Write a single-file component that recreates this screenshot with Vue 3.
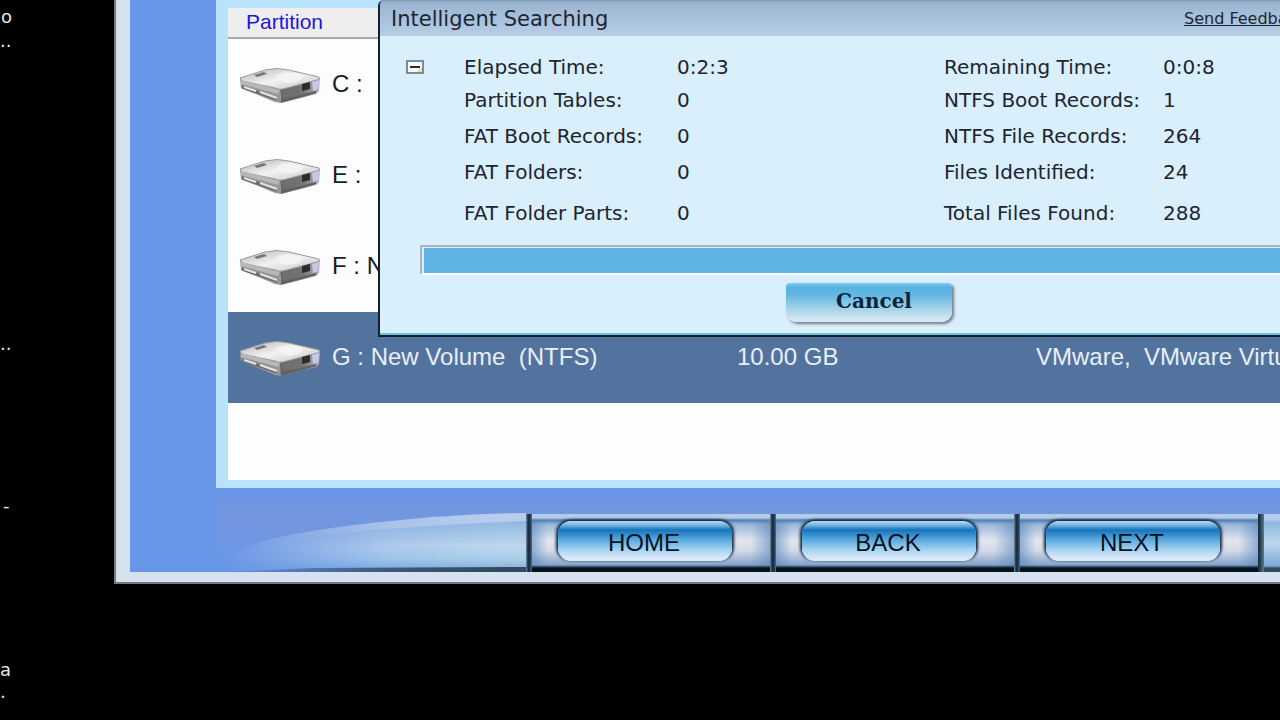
<script setup>
import { ref } from 'vue';

const shortcuts = ['o', '..', '..', '-', 'a', '.'];

const partitions = [
	{ name: 'C :', size: '', device: '' },
	{ name: 'E :', size: '', device: '' },
	{ name: 'F : New Volume', size: '', device: '' },
	{ name: 'G : New Volume  (NTFS)', size: '10.00 GB', device: 'VMware,  VMware Virtual' },
];
const selected = ref(3);

const stats = [
	['Elapsed Time:', '0:2:3', 'Remaining Time:', '0:0:8'],
	['Partition Tables:', '0', 'NTFS Boot Records:', '1'],
	['FAT Boot Records:', '0', 'NTFS File Records:', '264'],
	['FAT Folders:', '0', 'Files Identified:', '24'],
	['FAT Folder Parts:', '0', 'Total Files Found:', '288'],
];

const steps = ['HOME', 'BACK', 'NEXT'];
</script>

<template>
	<div class="desktop">
		<!-- desktop labels -->
		<span
			v-for="(text, index) in shortcuts"
			:key="index"
			:class="['shortcut', 'shortcut-' + index]"
		>{{ text }}</span>

		<main class="window">
			<div class="window__body">
				<section class="partitions">
					<div class="partitions__list">
						<table class="partitions__table">
							<thead>
								<tr>
									<th class="col-name">Partition</th>
									<th class="col-size"></th>
									<th></th>
								</tr>
							</thead>
							<tbody>
								<tr
									v-for="(item, index) in partitions"
									:key="item.name"
									:class="{ selected: index === selected }"
									@click="selected = index"
								>
									<td>
										<div class="drive">
											<svg
												class="drive__icon"
												width="82"
												height="36"
												viewBox="0 0 82 36"
											>
												<defs>
													<linearGradient :id="'top' + index" x1="0" y1="0" x2="1" y2="1">
														<stop offset="0" stop-color="#b4b4b4" />
														<stop offset="0.5" stop-color="#f2f2f2" />
														<stop offset="1" stop-color="#c2c2c2" />
													</linearGradient>
													<linearGradient :id="'side' + index" x1="0" y1="0" x2="1" y2="0">
														<stop offset="0" stop-color="#666" />
														<stop offset="0.6" stop-color="#777" />
														<stop offset="1" stop-color="#b5b4cc" />
													</linearGradient>
												</defs>
												<path d="M1 10 L41 20 L42 35 L36 34 L2 20 Z" fill="#969696" />
												<path d="M41 20 L81 10 L80 23 L77 26 L42 35 Z" :fill="'url(#side' + index + ')'" />
												<path d="M1 10 L26 2 Q38 -1 50 2 L80 9 Q82 11 78 12 L44 21 Q40 22 36 20 L3 13 Z" :fill="'url(#top' + index + ')'" stroke="#999" stroke-width="1" />
												<path d="M37 7 Q50 1 65 8 Q62 15 48 15 Q39 13 37 7 Z" fill="#f5f5f5" opacity="0.8" />
												<path d="M15 7 L25 4 L28 6 L18 9 Z" fill="#777" />
												<path d="M2 14 L40 24" stroke="#b8b8b8" stroke-width="4" />
												<path d="M3 19 L38 31" stroke="#6c6c6c" stroke-width="3" />
												<path d="M5 19 L17 23 M21 24 L38 30" stroke="#e4e4e4" stroke-width="2" />
												<path d="M44 23 L61 18 L61 24 L44 30 Z" fill="#707070" />
												<path d="M63 16 L71 14 L71 21 L63 23 Z" fill="#2c2c2c" />
												<path d="M73 14 L80 12 L79 21 L74 23 Z" fill="#c9c8e6" />
												<path d="M42 33 L77 24" stroke="#606060" stroke-width="2" />
											</svg>
											<span>{{ item.name }}</span>
										</div>
									</td>
									<td>{{ item.size }}</td>
									<td>{{ item.device }}</td>
								</tr>
							</tbody>
						</table>
					</div>
				</section>

				<nav class="steps">
					<svg
						class="steps__swoosh"
						width="310"
						height="60"
						viewBox="0 0 310 60"
					>
						<defs>
							<linearGradient id="fade" x1="0" y1="0" x2="1" y2="0">
								<stop offset="0.02" stop-color="#fff" stop-opacity="0" />
								<stop offset="0.55" stop-color="#fff" stop-opacity="0.8" />
								<stop offset="0.9" stop-color="#fff" />
							</linearGradient>
							<linearGradient id="wing" x1="0" y1="0" x2="0" y2="1">
								<stop offset="0" stop-color="#8fb8e0" />
								<stop offset="0.5" stop-color="#bdd7ee" />
								<stop offset="0.75" stop-color="#aacdea" />
								<stop offset="1" stop-color="#79a9d8" />
							</linearGradient>
							<mask id="wingMask">
								<rect width="310" height="60" fill="url(#fade)" />
							</mask>
						</defs>
						<g mask="url(#wingMask)">
							<path d="M0 48 Q40 28 84 21 Q134 12 217 5 Q270 1 310 1 L310 60 L0 60 Z" fill="#b7cdec" />
							<path d="M0 52 Q40 34 90 25 Q184 14 310 9 L310 60 L0 60 Z" fill="url(#wing)" />
							<path d="M0 60 L100 56 L310 55 L310 60 Z" fill="#334961" />
						</g>
					</svg>
					<div
						v-for="step in steps"
						:key="step"
						class="steps__cell"
					>
						<button type="button" class="steps__button">{{ step }}</button>
					</div>
					<div class="steps__tail"></div>
				</nav>
			</div>
		</main>

		<!-- search progress dialog -->
		<section class="dialog">
			<header class="dialog__title">
				<h1>Intelligent Searching</h1>
				<a href="#">Send Feedback</a>
			</header>
			<div class="dialog__details">
				<button type="button" class="dialog__toggle" aria-label="Collapse details">
					<svg width="18" height="14" viewBox="0 0 18 14">
						<rect x="1" y="1" width="16" height="12" fill="#fff" stroke="#7b8c9c" stroke-width="2" />
						<path d="M10 12 L16 7 L16 12 Z" fill="#f3d9a0" />
						<path d="M4 7 H14" stroke="#3a2b1c" stroke-width="2" />
					</svg>
				</button>
				<dl class="stats">
					<template v-for="row in stats" :key="row[0]">
						<dt>{{ row[0] }}</dt>
						<dd>{{ row[1] }}</dd>
						<dt>{{ row[2] }}</dt>
						<dd>{{ row[3] }}</dd>
					</template>
				</dl>
			</div>
			<progress class="dialog__progress" value="100" max="100" aria-label="Search progress"></progress>
			<div class="dialog__actions">
				<button type="button" class="cancel">Cancel</button>
			</div>
		</section>
	</div>
</template>

<style>
	body{
		background: #000;
	}
</style>

<style scoped>
	.desktop{
		position: relative;
		min-height: 100vh;
		overflow: hidden;
		background: #000;
		font-family: "Liberation Sans", Arial, sans-serif;
	}
	.shortcut{
		position: absolute;
		left: 0;
		color: #e8e8e8;
		font: 18px/20px "DejaVu Sans", Verdana, sans-serif;
	}
	.shortcut-0{
		left: 1px;
		top: 7px;
	}
	.shortcut-1{
		top: 31px;
	}
	.shortcut-2{
		top: 334px;
	}
	.shortcut-3{
		left: 3px;
		top: 496px;
	}
	.shortcut-4{
		top: 660px;
	}
	.shortcut-5{
		top: 682px;
	}
	.window{
		margin-left: 114px;
		padding: 0 0 10px 14px;
		border: solid #77797c;
		border-width: 0 0 2px 2px;
		background: #d5e3f0;
	}
	.window__body{
		background: #6896e8;
	}
	.partitions{
		margin-left: 86px;
		padding: 8px 0 8px 12px;
		background: #b9e2fc;
	}
	.partitions__list{
		padding-bottom: 77px;
		background: #fdfdfd;
	}
	.partitions__table{
		width: 100%;
		table-layout: fixed;
		border-spacing: 0;
	}
	th{
		height: 27px;
		padding: 0 0 2px 18px;
		border-bottom: 2px solid #aaa;
		background: #efeeee;
		color: #1d17dc;
		font-size: 21px;
		font-weight: normal;
		line-height: 24px;
		text-align: left;
	}
	.col-name{
		width: 491px;
	}
	.col-size{
		width: 281px;
	}
	td{
		height: 89px;
		padding: 0 0 2px;
		color: #1c1c22;
		font-size: 24px;
		line-height: 28px;
		white-space: pre;
	}
	.selected{
		background: #53739f;
	}
	.selected td{
		color: #e8effa;
	}
	.drive{
		display: flex;
		align-items: center;
		gap: 11px;
		padding-left: 11px;
	}
	.drive__icon{
		flex: none;
		margin-top: 4px;
	}
	.steps{
		display: flex;
		height: 60px;
		margin-left: 86px;
		padding-top: 24px;
		background: linear-gradient(#6896e8, #7397df 30px, #6896e8);
	}
	.steps__swoosh{
		flex: none;
	}
	.steps__cell{
		box-sizing: border-box;
		flex: none;
		display: flex;
		width: 244px;
		margin-top: 2px;
		padding: 7px 0 0 32px;
		background:
			linear-gradient(90deg, #7890a6, #172d40 2px, #1d3449 4px, #4f6f8f 6px) 0 0 / 6px 100% no-repeat,
			linear-gradient(#b5cce6 0 4px, #4f7fb1 6px, transparent 10px, transparent 51px, #07111c 54px),
			linear-gradient(90deg, #5b8abf99 6px, transparent 22px, transparent 224px, #5b8abf99),
			linear-gradient(#7da5d2 4px, #e2e5ee 26px, #d8dcea 36px, #7c9fc8 52px);
	}
	.steps__button{
		width: 174px;
		height: 40px;
		padding: 4px 2px 0 0;
		border: 0;
		border-radius: 13px;
		background: linear-gradient(#b9dcf3 0, #78b5df 4px, #1474bd 9px, #5cabe0 19px, #a9d3f2 29px, #dceaf8 38px);
		box-shadow: -2px -1px 3px #0b2740, 2px -1px 3px #0b2740;
		color: #07131f;
		font: 24px/28px "Liberation Sans", Arial, sans-serif;
	}
	.steps__tail{
		flex: 1;
		margin-top: 2px;
		background:
			linear-gradient(90deg, #172d40, #24394d 2px, #62788d 6px) 0 0 / 6px 100% no-repeat,
			linear-gradient(#b7cdec 5px, #8fb8e0 9px, #bdd7ee 30px, #79a9d8 52px, #334961 54px);
	}
	.dialog{
		position: absolute;
		top: 0;
		left: 378px;
		right: 0;
		border: solid #14202b;
		border-width: 0 0 2px 2px;
		border-top-left-radius: 6px;
		background: #d9effc;
		box-shadow: inset 0 -2px 0 #6cc4da;
		color: #1d2530;
		font-family: "DejaVu Sans", Verdana, sans-serif;
		overflow: hidden;
	}
	.dialog__title{
		display: flex;
		align-items: center;
		box-sizing: border-box;
		height: 36px;
		padding: 2px 0 0 11px;
		background: linear-gradient(#7f98b3 0, #9bb5d1 3px, #b7cde7);
		white-space: nowrap;
	}
	.dialog__title h1{
		flex: 1;
		margin: 0;
		font-size: 21px;
		font-weight: normal;
		line-height: 26px;
	}
	.dialog__title a{
		flex: none;
		width: 96px;
		color: #1d2530;
		font-size: 16px;
		line-height: 20px;
	}
	.dialog__details{
		display: flex;
		align-items: flex-start;
		gap: 40px;
		height: 194px;
		padding: 15px 0 0 26px;
	}
	.dialog__toggle{
		display: flex;
		margin-top: 9px;
		padding: 0;
		border: 0;
		background: none;
	}
	.stats{
		display: grid;
		grid-template-columns: 213px 267px 219px 1fr;
		grid-template-rows: 32px 34px 38px 34px 48px;
		align-items: center;
		flex: 1;
		margin: 0;
		font-size: 20px;
		line-height: 24px;
		white-space: nowrap;
	}
	.stats dd{
		margin: 0;
	}
	.dialog__progress{
		appearance: none;
		display: block;
		box-sizing: border-box;
		width: calc(100% - 40px);
		height: 30px;
		margin-left: 40px;
		padding: 1px 0 0 2px;
		border: solid #a7b3c0;
		border-width: 2px 0 0 2px;
		border-bottom: 2px solid #fff;
		background: #d9effc;
	}
	.dialog__progress::-webkit-progress-bar{
		background: #d9effc;
	}
	.dialog__progress::-webkit-progress-value{
		background: #5fb4e3;
	}
	.dialog__actions{
		height: 52px;
		padding: 8px 0 0 406px;
	}
	.cancel{
		width: 166px;
		height: 39px;
		padding: 0 0 4px 10px;
		border: 0;
		border-radius: 4px 4px 10px 10px;
		background: linear-gradient(#8accec 0, #55b3e0 4px, #62b7e1 12px, #d5e7f1 36px);
		box-shadow: 2px 2px 3px #6d7c88;
		color: #0b2438;
		font: bold 20px/24px "DejaVu Serif", Georgia, serif;
	}
</style>
